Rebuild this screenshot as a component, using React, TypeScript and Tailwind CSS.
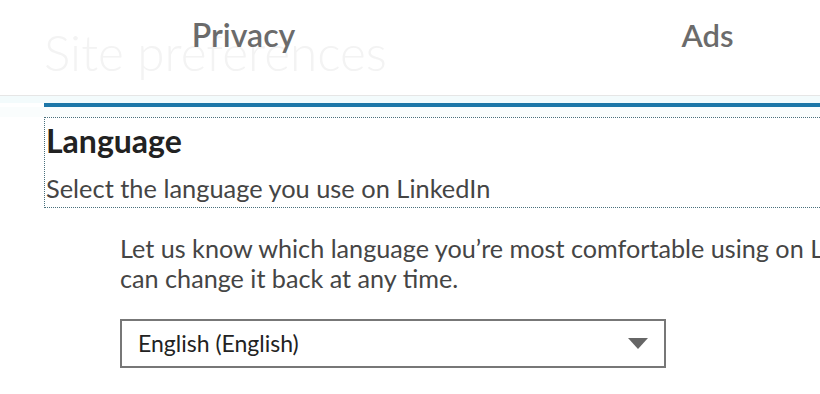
import React from "react";

export default function App() {
  const font = { fontFamily: "Lato, 'Open Sans', sans-serif" };
  return (
    <div className="w-[820px] h-[394px] overflow-hidden bg-white relative" style={font}>
      <div className="relative h-[96px] border-b border-[#e6e6e6]">
        <div className="pl-[44px] pt-[20px] text-[49.5px] leading-[64px] font-light text-[#f3f3f3] whitespace-nowrap">
          Site preferences
        </div>
        <div className="absolute left-0 top-[13px] flex w-[950px]">
          <div className="w-[487px] text-center text-[32px] leading-[44px] font-semibold text-[#6b6b6b]">Privacy</div>
          <div className="w-[441px] text-center text-[31px] leading-[44px] font-semibold text-[#6b6b6b]">Ads</div>
        </div>
      </div>
      <div className="h-[7px] bg-[#f3fbfc]" />
      <div className="ml-[44px] h-[4px] bg-[#1d77a8]" />
      <div className="h-[10px] bg-[#fafdfd]" />
      <div className="ml-[44px] w-[900px] border border-dotted border-[#49707c] pl-[1px]">
        <h2 className="text-[32px] leading-[46px] font-bold text-[#222]">Language</h2>
        <p className="pt-[5px] text-[25.4px] leading-[38px] text-[#454545] whitespace-nowrap">Select the language you use on LinkedIn</p>
      </div>
      <div className="pl-[120px] pt-[25px] w-[1000px]">
        <p className="text-[25.2px] leading-[30px] text-[#454545] w-[840px]">
          Let us know which language you’re most comfortable using on LinkedIn. You can change it back at any time.
        </p>
        <div className="mt-[26px] w-[546px] h-[49px] border-2 border-[#777] flex items-center justify-between pl-[16px] pr-[16px]">
          <span className="text-[23px] text-[#222]">English (English)</span>
          <svg width="20" height="11" viewBox="0 0 20 11"><polygon points="0,0 20,0 10,11" fill="#666" /></svg>
        </div>
      </div>
    </div>
  );
}
